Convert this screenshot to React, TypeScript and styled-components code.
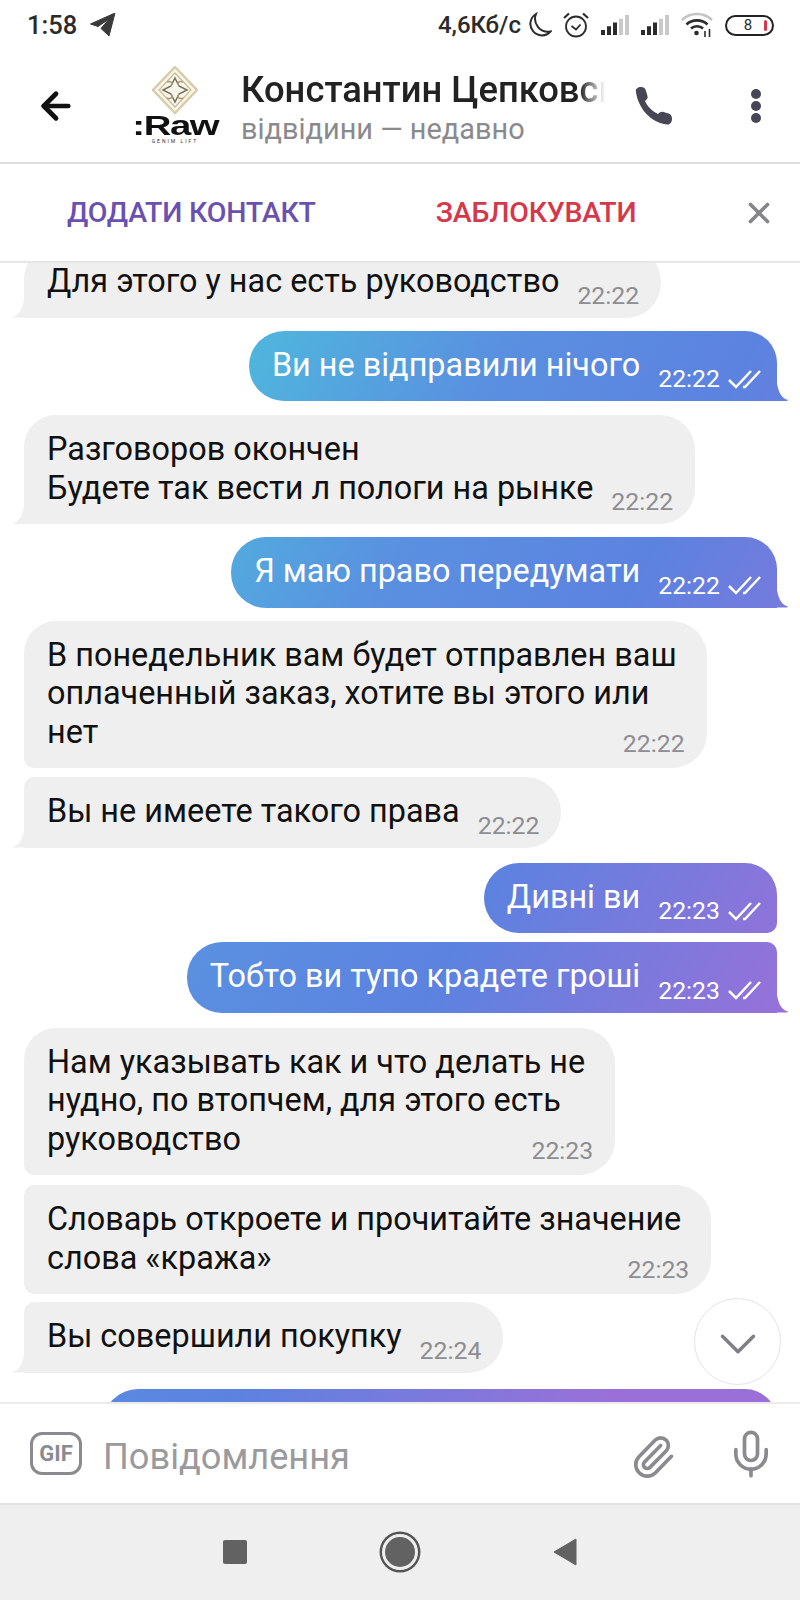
import styled, { createGlobalStyle } from "styled-components";
import { ArrowLeft, ChevronDown, Mic, Paperclip, X } from "lucide-react";

// -----------------DATA-----------------//
interface Message {
    out?: boolean
    lines: string[]
    time: string
    gap: number // space above the bubble
    squareTop?: boolean // joined to the previous bubble
    tail?: boolean
    timeBelow?: boolean // the stamp sits on its own last line, under the text
}

const messages: Message[] = [
    { lines: ["Для этого у нас есть руководство"], time: "22:22", tail: true, gap: -16 },
    { out: true, lines: ["Ви не відправили нічого"], time: "22:22", tail: true, gap: 13 },
    { lines: ["Разговоров окончен", "Будете так вести л пологи на рынке"], time: "22:22", tail: true, gap: 14 },
    { out: true, lines: ["Я маю право передумати"], time: "22:22", tail: true, gap: 13 },
    { lines: ["В понедельник вам будет отправлен ваш", "оплаченный заказ, хотите вы этого или", "нет"], time: "22:22", timeBelow: true, gap: 13 },
    { lines: ["Вы не имеете такого права"], time: "22:22", squareTop: true, tail: true, gap: 9 },
    { out: true, lines: ["Дивні ви"], time: "22:23", gap: 15 },
    { out: true, lines: ["Тобто ви тупо крадете гроші"], time: "22:23", squareTop: true, tail: true, gap: 9 },
    { lines: ["Нам указывать как и что делать не", "нудно, по втопчем, для этого есть", "руководство"], time: "22:23", timeBelow: true, gap: 15 },
    { lines: ["Словарь откроете и прочитайте значение", "слова «кража»"], time: "22:23", squareTop: true, timeBelow: true, gap: 10 },
    { lines: ["Вы совершили покупку"], time: "22:24", squareTop: true, tail: true, gap: 8 },
];

const signalBars = [4, 7, 10, 13, 16];

// -----------------STYLES-----------------//
const Global = createGlobalStyle`
    html, body { margin: 0; padding: 0; background: #fff; }
    * { box-sizing: border-box; }
`;

const Screen = styled.div`
    width: 800px;
    height: 1600px;
    display: flex;
    flex-direction: column;
    overflow: hidden;
    background: #fff;
    font-family: Roboto, "Noto Sans", sans-serif;
    color: #111;
`;

const StatusBar = styled.div`
    height: 50px;
    flex: none;
    display: flex;
    align-items: center;
    justify-content: space-between;
    padding: 0 26px 0 27px;
    font-size: 24px;
    font-weight: 500;
    color: #2b2b2b;
`;

const StatusGroup = styled.div`
    display: flex;
    align-items: center;
`;

const Clock = styled.span`
    font-size: 25.5px;
`;

const Speed = styled.span`
    margin-right: 5px;
`;

const Header = styled.header`
    height: 114px;
    flex: none;
    display: flex;
    align-items: center;
    border-bottom: 2px solid #dedede;
`;

const BackButton = styled.div`
    width: 135px;
    padding-left: 35px;
    display: flex;
    color: #111;
`;

const Logo = styled.div`
    width: 80px;
    flex: none;
    display: flex;
    flex-direction: column;
    align-items: center;
    margin-right: 26px;
`;

const LogoWord = styled.span`
    font-family: "Liberation Sans", sans-serif;
    font-weight: 700;
    font-size: 27px;
    line-height: 22px;
    letter-spacing: -1px;
    color: #111;
    transform: scaleX(1.42);
`;

const LogoTag = styled.span`
    font-size: 5px;
    line-height: 9px;
    letter-spacing: 2px;
    color: #333;
    white-space: nowrap;
`;

const Who = styled.div`
    width: 364px;
    flex: none;
    display: flex;
    flex-direction: column;
    overflow: hidden;
`;

const Name = styled.div`
    font-size: 36.4px;
    font-weight: 500;
    line-height: 44px;
    color: #222;
    white-space: nowrap;
    overflow: hidden;
    -webkit-mask-image: linear-gradient(90deg, #000 93%, transparent 100%);
    mask-image: linear-gradient(90deg, #000 93%, transparent 100%);
`;

const Seen = styled.div`
    font-size: 28.9px;
    line-height: 34px;
    height: 33px;
    overflow: hidden;
    color: #8a8a8e;
    white-space: nowrap;
`;

const HeaderIcons = styled.div`
    flex: 1;
    display: flex;
    align-items: center;
    justify-content: space-between;
    padding: 0 38px 0 28px;
`;

const ActionBar = styled.div`
    height: 99px;
    flex: none;
    display: flex;
    align-items: center;
    border-bottom: 2px solid #e6e6e6;
`;

const ActionButton = styled.span<{ $danger?: boolean }>`
    font-size: 28.5px;
    font-weight: 500;
    letter-spacing: -0.2px;
    white-space: nowrap;
    color: ${({ $danger }) => ($danger ? "#d5384a" : "#6a50b0")};
    margin-left: ${({ $danger }) => ($danger ? "120px" : "67px")};
`;

const CloseButton = styled.div`
    margin-left: auto;
    margin-right: 24px;
    display: flex;
    color: #85858a;
`;

const Chat = styled.div`
    flex: 1;
    min-height: 0;
    position: relative;
    overflow: hidden;
    display: flex;
    flex-direction: column;
    align-items: flex-start;
`;

const Bubble = styled.div<{ $out?: boolean; $squareTop?: boolean; $tail?: boolean; $gap: number }>`
    position: relative;
    flex: none;
    display: flex;
    align-items: flex-end;
    padding: 15px ${({ $out }) => ($out ? "14px" : "22px")} 17px 23px;
    font-size: 32.4px;
    line-height: 38.5px;
    white-space: nowrap;
    margin-top: ${({ $gap }) => $gap}px;
    align-self: ${({ $out }) => ($out ? "flex-end" : "flex-start")};
    margin-left: ${({ $out }) => ($out ? "0" : "24px")};
    margin-right: ${({ $out }) => ($out ? "23px" : "0")};
    color: ${({ $out }) => ($out ? "#fff" : "#111")};
    background: ${({ $out }) =>
        $out
            ? "linear-gradient(116.6deg, #4cc0dc 22%, #5a90e0 42%, #5c82e0 58%, #9a70d8 82%) fixed"
            : "#efefef"};
    border-radius: ${({ $out, $squareTop, $tail }) => {
        const top = $squareTop ? "10px" : "32px";
        const bottom = $tail ? "0" : "10px";
        return $out ? `35px ${top} ${bottom} 35px` : `${top} 35px 35px ${bottom}`;
    }};

    ${({ $tail, $out }) =>
        $tail &&
        `&::after {
            content: "";
            position: absolute;
            bottom: 0;
            width: 12px;
            height: 26px;
            background: inherit;
            ${$out
                ? `right: -11px; clip-path: path("M0 0 C1 14 4 23 12 25 Q12 26 10 26 L0 26 Z");`
                : `left: -11px; clip-path: path("M12 0 C11 14 8 23 0 25 Q0 26 2 26 L12 26 Z");`}
        }`}
`;

const ClippedBubble = styled(Bubble)`
    width: 674px;
    height: 70px;
`;

const TextBlock = styled.div<{ $below?: boolean }>`
    padding-right: ${({ $below }) => ($below ? "8px" : "0")};
`;

const Line = styled.div``;

const Stamp = styled.span<{ $out?: boolean; $below?: boolean }>`
    display: flex;
    align-items: center;
    font-size: 24.8px;
    line-height: 26px;
    margin-left: 18px;
    margin-bottom: -8px;
    color: ${({ $out }) => ($out ? "#fff" : "#8d8d92")};

    ${({ $below }) =>
        $below &&
        `position: absolute;
        right: 22px;
        bottom: 11px;
        margin-bottom: 0;`}
`;

const Checks = styled.svg`
    margin-left: 8px;
    margin-right: 2px;
`;

const ScrollDown = styled.div`
    position: absolute;
    left: 694px;
    top: 1035px;
    width: 87px;
    height: 87px;
    padding-top: 4px;
    border-radius: 50%;
    background: #fff;
    border: 1.5px solid #e4e4e4;
    display: flex;
    align-items: center;
    justify-content: center;
    color: #7f7f85;
`;

const Composer = styled.div`
    height: 103px;
    flex: none;
    display: flex;
    align-items: center;
    background: #fff;
    border-top: 2px solid #ececec;
    border-bottom: 2px solid #e2e2e2;
    padding: 0 23px 0 30px;
`;

const GifBadge = styled.div`
    width: 52px;
    height: 43px;
    flex: none;
    border: 3.5px solid #8a8a8f;
    border-radius: 12px;
    display: flex;
    align-items: center;
    justify-content: center;
    font-size: 22px;
    font-weight: 700;
    color: #8a8a8f;
`;

const Placeholder = styled.div`
    flex: 1;
    margin-left: 21px;
    padding-top: 5px;
    font-size: 36.2px;
    color: #9a9a9e;
`;

const ComposerIcon = styled.div<{ $clip?: boolean }>`
    display: flex;
    color: #8a8a8f;
    margin-left: ${({ $clip }) => ($clip ? "0" : "49px")};
    padding-top: ${({ $clip }) => ($clip ? "6px" : "0")};
`;

const NavBar = styled.nav`
    height: 95px;
    flex: none;
    display: flex;
    align-items: center;
    justify-content: center;
    gap: 135px;
    background: #efefef;
    padding-bottom: 2px;
`;

const NavSquare = styled.div`
    width: 24px;
    height: 24px;
    border-radius: 2px;
    background: #626262;
`;

const NavCircle = styled.div`
    width: 36px;
    height: 36px;
    border-radius: 50%;
    background: #626262;
    border: 3px solid #efefef;
    box-shadow: 0 0 0 2.5px #555;
`;

const BatteryShell = styled.div`
    position: relative;
    width: 49px;
    height: 21px;
    margin-left: 12px;
    border: 2px solid #222;
    border-radius: 11px;
    display: flex;
    align-items: center;
    justify-content: center;
    font-size: 15px;
    font-weight: 400;
    padding-right: 3px;
`;

const BatteryLevel = styled.span`
    position: absolute;
    right: 5px;
    top: 3px;
    width: 3px;
    height: 11px;
    border-radius: 2px;
    background: #d8344a;
`;

// -----------------ICONS-----------------//
const TelegramIcon = () => (
    <svg width="26" height="24" viewBox="0 0 26 24" style={{ marginLeft: 13 }}>
        <path d="M25 0 L0.5 11 L8 13.5 L19 6 L11 15.5 L19 23 Z" fill="#3a3a3a" stroke="#3a3a3a" strokeLinejoin="round" />
    </svg>
);

const MoonIcon = () => (
    <svg width="26" height="26" viewBox="0 0 26 26" fill="none" stroke="#2b2b2b" strokeWidth="2">
        <path d="M10 2 A11.5 11.5 0 1 0 24.5 19.5 A13 13 0 0 1 10 2 Z" />
    </svg>
);

const AlarmIcon = () => (
    <svg width="28" height="28" viewBox="0 0 28 28" fill="none" stroke="#2b2b2b" strokeWidth="1.8" style={{ marginLeft: 10 }}>
        <circle cx="14" cy="15.5" r="10" />
        <path d="M9.5 15 L14 18.5 L18.5 13.5" />
        <path d="M2 7 L7 2.5 M26 7 L21 2.5" strokeWidth="2.2" />
    </svg>
);

const SignalIcon = () => (
    <svg width="30" height="24" viewBox="0 0 30 24" style={{ marginLeft: 10 }}>
        {signalBars.map((h, i) => (
            <rect key={i} x={i * 6 + 1} y={22 - h * 1.25} width="4" height={h * 1.25} fill={i < 3 ? "#2b2b2b" : "#c9c9c9"} />
        ))}
    </svg>
);

const WifiIcon = () => (
    <svg width="32" height="26" viewBox="0 0 32 26" fill="none" style={{ marginLeft: 11 }}>
        <path d="M1 8 C9 0 23 0 31 8" stroke="#c4c4c4" strokeWidth="2.6" />
        <path d="M5.5 12.5 C11 7 21 7 26.5 12.5" stroke="#2b2b2b" strokeWidth="2.6" />
        <path d="M10 16.5 C13 13.5 19 13.5 22 16.5" stroke="#2b2b2b" strokeWidth="2.6" />
        <circle cx="15.5" cy="21" r="2.3" fill="#2b2b2b" />
        <path d="M24 19 V25 M28.5 17 V25" stroke="#2b2b2b" strokeWidth="1.6" />
    </svg>
);

const LogoMark = () => (
    <svg width="46" height="48" viewBox="0 0 46 48" fill="none" style={{ marginBottom: 1 }}>
        <path d="M23 1 L45 24 L23 47 L1 24 Z" fill="#f8f5ea" stroke="#d8cca8" strokeWidth="2.4" />
        <path d="M23 7 L39 24 L23 41 L7 24 Z" stroke="#c9bd98" strokeWidth="1.2" />
        <path d="M23 12 L27 20 L35 24 L27 28 L23 36 L19 28 L11 24 L19 20 Z" stroke="#77705a" strokeWidth="1.5" />
        <path d="M15 16 C20 14 21 18 19 20 M31 16 C26 14 25 18 27 20 M15 32 C20 34 21 30 19 28 M31 32 C26 34 25 30 27 28" stroke="#a89d7a" strokeWidth="1.5" />
    </svg>
);

const PhoneIcon = () => (
    <svg width="40" height="40" viewBox="0 0 40 40" fill="#464655">
        <path d="M3 6 C2 3 5 1 8 1 C11 1 12 2 13 5 L14.5 10 C15 12 14 13.5 12 15 C14 20 19 25 25 28 C27 26 28.5 25.5 30.5 26 L35.5 27.5 C38 28.5 39 30 39 33 C39 36 37 39 34 38.5 C18 37 5 22 3 6 Z" />
    </svg>
);

const DotsIcon = () => (
    <svg width="12" height="36" viewBox="0 0 12 36" fill="#464655">
        <circle cx="6" cy="6" r="5" />
        <circle cx="6" cy="18" r="5" />
        <circle cx="6" cy="30" r="5" />
    </svg>
);

const DoubleCheck = () => (
    <Checks width="33" height="19" viewBox="0 0 33 19" fill="none" stroke="#fff" strokeWidth="2.5">
        <path d="M1 10 L8 17 L23 1" />
        <path d="M15 17 L17 17 L32 1" />
    </Checks>
);

const NavBack = () => (
    <svg width="24" height="28" viewBox="0 0 24 28" fill="#626262">
        <path d="M23 1 V27 L1 14 Z" stroke="#626262" strokeLinejoin="round" />
    </svg>
);

// -----------------COMPONENT-----------------//
function ChatBubble({ m }: { m: Message }) {
    return (
        <Bubble $out={m.out} $squareTop={m.squareTop} $tail={m.tail} $gap={m.gap}>
            <TextBlock $below={m.timeBelow}>
                {m.lines.map((line) => (
                    <Line key={line}>{line}</Line>
                ))}
            </TextBlock>
            <Stamp $out={m.out} $below={m.timeBelow}>
                {m.time}
                {m.out && <DoubleCheck />}
            </Stamp>
        </Bubble>
    );
}

export default function App() {
    return (
        <Screen>
            <Global />
            <StatusBar>
                <StatusGroup>
                    <Clock>1:58</Clock>
                    <TelegramIcon />
                </StatusGroup>
                <StatusGroup>
                    <Speed>4,6Кб/с</Speed>
                    <MoonIcon />
                    <AlarmIcon />
                    <SignalIcon />
                    <SignalIcon />
                    <WifiIcon />
                    <BatteryShell>
                        8
                        <BatteryLevel />
                    </BatteryShell>
                </StatusGroup>
            </StatusBar>

            <Header>
                <BackButton>
                    <ArrowLeft size={42} strokeWidth={2.7} />
                </BackButton>
                <Logo>
                    <LogoMark />
                    <LogoWord>:Raw</LogoWord>
                    <LogoTag>GENIM LIFT</LogoTag>
                </Logo>
                <Who>
                    <Name>Константин Цепковский</Name>
                    <Seen>відвідини — недавно</Seen>
                </Who>
                <HeaderIcons>
                    <PhoneIcon />
                    <DotsIcon />
                </HeaderIcons>
            </Header>

            <ActionBar>
                <ActionButton>ДОДАТИ КОНТАКТ</ActionButton>
                <ActionButton $danger>ЗАБЛОКУВАТИ</ActionButton>
                <CloseButton>
                    <X size={34} strokeWidth={2.6} />
                </CloseButton>
            </ActionBar>

            <Chat>
                {messages.map((m, i) => (
                    <ChatBubble key={i} m={m} />
                ))}
                <ClippedBubble $out $gap={16} />
                <ScrollDown>
                    <ChevronDown size={62} strokeWidth={1.35} />
                </ScrollDown>
            </Chat>

            <Composer>
                <GifBadge>GIF</GifBadge>
                <Placeholder>Повідомлення</Placeholder>
                <ComposerIcon $clip>
                    <Paperclip size={46} strokeWidth={1.9} />
                </ComposerIcon>
                <ComposerIcon>
                    <Mic size={52} strokeWidth={1.7} />
                </ComposerIcon>
            </Composer>

            <NavBar>
                <NavSquare />
                <NavCircle />
                <NavBack />
            </NavBar>
        </Screen>
    );
}
